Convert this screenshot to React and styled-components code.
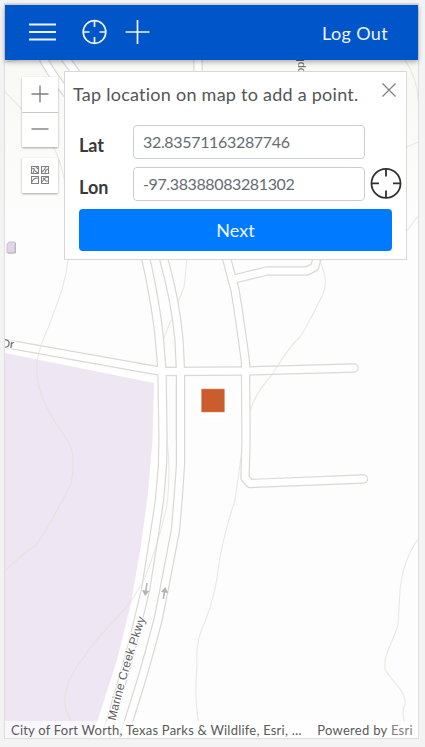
import React from "react";
import styled, { createGlobalStyle } from "styled-components";

const GlobalStyle = createGlobalStyle`
  * { box-sizing: border-box; }
  body { margin: 0; background: #f3f3f3; font-family: Lato, "Open Sans", sans-serif; }
`;

const Page = styled.div`
  width: 425px;
  height: 747px;
  padding: 4px 6px 8px 5px;
  overflow: hidden;
`;
const Frame = styled.main`
  display: flex;
  flex-direction: column;
  width: 413px;
  height: 734px;
  border-top: 1px solid #d4dbe5;
  box-shadow: 0 0 0 1px #dedede;
`;
const Header = styled.header`
  display: flex;
  align-items: center;
  height: 55px;
  flex: none;
  padding: 0 30px 0 24px;
  background: #0055c8;
  color: #edf4ff;
  box-shadow: 0 2px 5px rgba(0, 0, 0, 0.32);
  z-index: 2;
`;
const HeaderIcon = styled.svg`
  display: block;
  flex: none;
  margin: -${(p) => p.$lift}px ${(p) => p.$gap}px 0 0;
  fill: none;
  stroke: #edf4ff;
  stroke-width: 2;
`;
const LogOut = styled.button`
  margin-left: auto;
  padding: 0;
  border: 0;
  background: none;
  color: inherit;
  font: 400 18px/24px Lato, sans-serif;
  letter-spacing: 0.36px;
  white-space: nowrap;
`;
const MapArea = styled.section`
  position: relative;
  display: flex;
  flex-direction: column;
  justify-content: space-between;
  flex: 1;
  overflow: hidden;
  background: #fdfdfd;
`;
const MapCanvas = styled.svg`
  position: absolute;
  inset: 0;
`;
const Overlay = styled.div`
  position: relative;
  display: flex;
  align-items: flex-start;
  padding: 11px 0 0 17px;
`;
const Tools = styled.div`
  display: flex;
  flex-direction: column;
  gap: 11px;
  padding-top: 6px;
  margin-right: 6px;
`;
const ToolGroup = styled.div`
  width: 36px;
  background: #fff;
  box-shadow: 0 1px 2px rgba(0, 0, 0, 0.35);
`;
const ToolButton = styled.button`
  display: flex;
  align-items: center;
  justify-content: center;
  width: 36px;
  height: 35px;
  padding: 0 1px 2px 0;
  border: 0;
  background: none;
  & + & { border-top: 1px solid #c9c9c9; }
`;
const LineIcon = styled.svg`
  display: block;
  flex: none;
  fill: none;
  stroke: ${(p) => p.$color || "#808080"};
  stroke-width: ${(p) => p.$w || 1.4};
`;
const Panel = styled.form`
  flex: none;
  width: 343px;
  height: 189px;
  padding: 0 14px;
  border: 1px solid #d8d8d8;
  background: #fff;
`;
const PanelHead = styled.div`
  display: flex;
  justify-content: space-between;
  height: 53px;
  margin: 0 -6px;
`;
const Prompt = styled.div`
  padding-top: 10px;
  color: #555;
  font-size: 18px;
  line-height: 24px;
  letter-spacing: 0.25px;
  white-space: nowrap;
`;
const Close = styled.button`
  padding: 9px 2px 0 0;
  height: 26px;
  border: 0;
  background: none;
`;
const Field = styled.label`
  display: flex;
  align-items: center;
  height: 34px;
  margin-bottom: 8px;
`;
const FieldName = styled.span`
  flex: none;
  width: 54px;
  padding-top: 6px;
  color: #3a3a3a;
  font-size: 18px;
  font-weight: 700;
  line-height: 24px;
`;
const Input = styled.input`
  flex: none;
  width: 232px;
  height: 34px;
  margin-right: 5px;
  padding: 0 9px 1px;
  border: 1px solid #c8cfd8;
  border-radius: 4px;
  outline: 0;
  background: #fff;
  color: #666b72;
  font: 400 16px Lato, sans-serif;
  letter-spacing: ${(p) => p.$spacing}px;
`;
const Next = styled.button`
  display: block;
  width: 313px;
  height: 42px;
  padding: 0;
  border: 0;
  border-radius: 4px;
  background: #007bff;
  color: #edf6ff;
  font: 400 18px Lato, sans-serif;
  letter-spacing: 0.1px;
`;
const Attribution = styled.footer`
  position: relative;
  display: flex;
  justify-content: space-between;
  height: 17px;
  padding: 0 5px 0 6px;
  background: rgba(255, 255, 255, 0.66);
  color: #5a5a5a;
  font-size: 13px;
  line-height: 18px;
  white-space: nowrap;
`;
const Credit = styled.span`
  letter-spacing: ${(p) => p.$spacing}px;
`;
const EsriLink = styled.span`
  color: #808080;
`;
const MapLabel = styled.text`
  font-family: "Liberation Sans", sans-serif;
  fill: #5f5f5f;
  stroke: #fff;
  stroke-width: 2.5px;
  paint-order: stroke;
`;

const ROADS = [
  "M43 58 Q54 80 85 115 Q132 190 146 260 C152 285 158 322 159.5 340 L162 371 L163 440 L162.5 465 L159.5 500 L155 530 L145.5 590 L131 650 L111 720 L104 742",
  "M65 58 L76 73 Q144 155 164 260 C171 285 177 318 179 340 L180.5 371 L180.5 465 L178 500 L175.5 530 L164 590 L158 620 L150 650 L141.5 680 L129 720 L122 742",
  "M2 343 L162 371.5 L246 371 L354 368",
  "M198 58 L198 90 Q211 190 227 260 L235 290 Q240 320 245.5 362 L246 440 L245 478 L250 483.5 L363.5 479",
  "M232 279.5 L267 271 L307 271 L314.5 267 L318 256",
];
const CONTOURS = [
  "M5 92 Q38 125 55 150 Q72 185 68 260 C65 288 56 305 49 326 Q42 340 38 356 Q34 375 42 396 C50 418 62 431 70 445 Q76 459 71 484 Q48 529 35 546 Q21 555 5 571",
  "M187 258 Q185 280 184 287 L178 302 M171 320 L164 338",
  "M319 260 Q330 280 322 296 Q308 325 300 337 C286 350 279 364 272 375 Q256 392 250 411",
  "M242 450 Q237 485 235 500 Q222 540 218 570 Q216 592 205 622 Q195 641 197 665 Q194 700 199 724",
  "M400 590 Q399 610 398 625 C394 640 383 655 385 669 C391 681 406 690 405 704 Q401 712 405 724",
  "M167 440 Q171 470 167 505 Q158 545 144 580 Q137 592 133 598 C113 626 100 631 82 660 Q61 686 66 710 L72 724",
  "M405 60 Q418 80 418 100 M407 147 L418 142 M407 231 L418 216",
  "M400 590 Q403 560 418 539",
];

function Roads() {
  return (
    <>
      {ROADS.map((d) => (
        <path key={d} d={d} stroke="#d9d8d5" strokeWidth="9.4" />
      ))}
      {ROADS.map((d) => (
        <path key={d} d={d} stroke="#fff" strokeWidth="7" />
      ))}
    </>
  );
}

function StreetMap() {
  return (
    <MapCanvas width="413" height="678" viewBox="5 60 413 678" fill="none">
      <defs>
        <linearGradient id="terrain" x1="0" y1="0" x2="0" y2="1">
          <stop offset="0" stopColor="#f8f8f4" />
          <stop offset="1" stopColor="#fdfdfd" />
        </linearGradient>
        <path id="parkway" d="M115.5 721 Q121 697 128 673 Q136 645 145.5 618 L150 604" />
      </defs>
      <rect x="5" y="60" width="413" height="160" fill="url(#terrain)" />
      <path d="M5 349 L160 379 L160 440 Q155 580 101 738 H5Z" fill="#fff" />
      <path
        d="M5 353 L154 383 L152.5 440 L148 493 L141 545 L131 603 L117 660 L97 722 L91 738 H5Z"
        fill="#eee6f2"
      />
      <path d="M5 62 L18 60" stroke="#ddd" />
      <g strokeLinecap="round" strokeLinejoin="round"><Roads /></g>
      <g stroke="#e4e0d9" strokeWidth="1.1" opacity=".7">
        {CONTOURS.map((d) => <path key={d} d={d} />)}
      </g>
      <path d="M7 244 L9 242 H15 V252 L13 253 H7Z" fill="#e3d4eb" stroke="#c9bfce" />
      <path d="M15.5 243 V253 H8" stroke="#bab4be" />
      <g stroke="#b4b4b4" strokeWidth="1.6">
        <path d="M147 583 L145.5 593" />
        <path d="M163.3 599 L165 589" />
      </g>
      <path d="M142 590 L149.4 591 L145 596Z M161 592 L168.2 593 L165.2 587Z" fill="#b4b4b4" />
      <MapLabel x="1" y="347" fontSize="12" transform="rotate(7 2 347)">Dr</MapLabel>
      <MapLabel fontSize="11" transform="translate(303.5 74) rotate(-90)">opl</MapLabel>
      <MapLabel fontSize="12">
        <textPath href="#parkway" textLength="107">Marine Creek Pkwy</textPath>
      </MapLabel>
      <rect x="197" y="385" width="32" height="32" fill="#fff" />
      <rect x="201.5" y="389" width="23" height="23" fill="#ca5c2d" stroke="#df916f" strokeWidth=".5" />
    </MapCanvas>
  );
}

export default function App() {
  return (
    <Page>
      <GlobalStyle />
      <Frame>
        <Header>
          <HeaderIcon $lift={1} $gap={25} width="28" height="20" viewBox="0 0 28 20">
            <path d="M0 2.5H27M0 10H27M0 17.5H27" />
          </HeaderIcon>
          <HeaderIcon $lift={2} $gap={18} width="25" height="26" viewBox="0 0 25 26">
            <circle cx="12.5" cy="13" r="11.3" strokeWidth="1.7" />
            <path d="M12.5 2V8M12.5 18V24M1.5 13H7.5M17.5 13H23.5" strokeWidth="1.7" />
          </HeaderIcon>
          <HeaderIcon $lift={2} $gap={0} width="25" height="26" viewBox="0 0 25 26">
            <path d="M12.5 1V25M.5 13H24.5" strokeWidth="1.7" />
          </HeaderIcon>
          <LogOut type="button">Log Out</LogOut>
        </Header>
        <MapArea>
          <StreetMap />
          <Overlay>
            <Tools>
              <ToolGroup>
                <ToolButton type="button" aria-label="Zoom in">
                  <LineIcon width="18" height="18"><path d="M9 .5V17.5M.5 9H17.5" /></LineIcon>
                </ToolButton>
                <ToolButton type="button" aria-label="Zoom out">
                  <LineIcon width="18" height="18"><path d="M.5 9H17.5" /></LineIcon>
                </ToolButton>
              </ToolGroup>
              <ToolGroup>
                <ToolButton type="button" aria-label="Basemaps">
                  <LineIcon $w={1.1} width="18" height="18" viewBox="0 0 18 18">
                    <path d="M.5.5H7.5V7.5H.5ZM10.5.5H17.5V7.5H10.5ZM.5 10.5H7.5V17.5H.5ZM10.5 10.5H17.5V17.5H10.5Z" />
                    <path d="M1 3L3 2.5L4 5L7 7M2 7L3 4.5M5 1L7 3M11 6L13 4L15 1M14 7L15 4L17 3M1 16Q2 12 7 12M11 16L14 12L17 11M12 12L15 15L17 15" />
                  </LineIcon>
                </ToolButton>
              </ToolGroup>
            </Tools>
            <Panel>
              <PanelHead>
                <Prompt>Tap location on map to add a point.</Prompt>
                <Close type="button" aria-label="Close">
                  <LineIcon $w={1.2} width="14" height="14"><path d="M.5.5L13.5 13.5M13.5.5L.5 13.5" /></LineIcon>
                </Close>
              </PanelHead>
              <Field>
                <FieldName>Lat</FieldName>
                <Input $spacing={-0.33} readOnly value="32.83571163287746" />
              </Field>
              <Field>
                <FieldName>Lon</FieldName>
                <Input $spacing={-0.38} readOnly value="-97.38388083281302" />
                <LineIcon $color="#303030" $w={1.8} width="32" height="32">
                  <circle cx="16" cy="15.4" r="14.5" />
                  <path d="M16 1V8.5M16 22.5V30M1 15.4H9M23 15.4H31" />
                </LineIcon>
              </Field>
              <Next type="button">Next</Next>
            </Panel>
          </Overlay>
          <Attribution>
            <Credit $spacing={0.22}>City of Fort Worth, Texas Parks &amp; Wildlife, Esri, …</Credit>
            <Credit $spacing={0.3}>Powered by <EsriLink>Esri</EsriLink></Credit>
          </Attribution>
        </MapArea>
      </Frame>
    </Page>
  );
}
